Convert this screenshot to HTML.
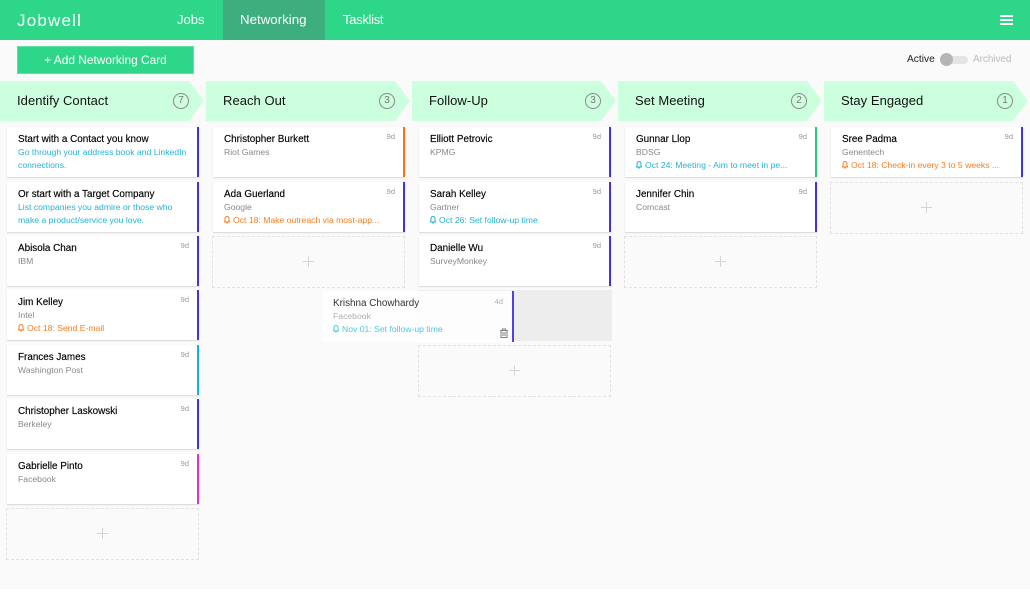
<!DOCTYPE html>
<html><head><meta charset="utf-8">
<style>
html,body{margin:0;padding:0;background:#fff}
#p{position:relative;width:1030px;height:600px;overflow:hidden;background:#fff;font-family:"Liberation Sans",sans-serif}
#bg{position:absolute;left:0;top:40px;width:1030px;height:549px;background:#fafafa}
#nav{position:absolute;left:0;top:0;width:1030px;height:40px;background:#2dd688}
.a{position:absolute;white-space:nowrap}
.n{color:#fff;font-size:13.3px;top:12px;line-height:16px}
.h{position:absolute;top:81px;width:204px;height:40px;background:#ccffdd;clip-path:polygon(0 0,189px 0,204px 20px,189px 40px,0 40px)}
.h span{position:absolute;left:17px;top:11px;font-size:13px;line-height:18px;color:#111;white-space:nowrap;letter-spacing:.05px}
.h i{position:absolute;left:173px;top:12px;width:14px;height:14px;border:1px solid #888;border-radius:50%;font:normal 10px/14px "Liberation Sans",sans-serif;text-align:center;color:#777}
.c{position:absolute;width:190px;height:50px;background:#fff;border-right:2px solid #4433dd;box-shadow:0 1px 1px #d8d8d8,0 0 1px #eee}
.t{position:absolute;left:11px;top:6px;font-size:9.9px;line-height:14px;color:#000;white-space:nowrap;-webkit-text-stroke:.15px #000}
.s{position:absolute;left:11px;top:19px;font-size:8.65px;line-height:13px;color:#888;white-space:nowrap}
.l{position:absolute;left:11px;top:32px;font-size:8.65px;line-height:13px;white-space:nowrap}
.b{color:#22b3d6}.o{color:#f97c1c}
.l svg{vertical-align:-1px;margin-right:3px}
.d{position:absolute;right:8px;top:5px;font-size:7.5px;line-height:10px;color:#999}
.e{position:absolute;width:191px;height:50px;border:1px dashed #e2e2e2}
.e:before{content:"";position:absolute;left:90px;top:24px;width:11px;height:1px;background:#d4d4d4}
.e:after{content:"";position:absolute;left:95px;top:19px;width:1px;height:11px;background:#d4d4d4}
</style></head><body>
<div id="p">
<div id="bg"></div>
<div id="nav"></div>
<div class="a" style="left:223px;top:0;width:102px;height:40px;background:#3fae7f"></div>
<div class="a" style="left:17px;top:10px;font-size:17px;line-height:21px;color:#fff;letter-spacing:1.2px">Jobwell</div>
<div class="a n" style="left:177px;font-size:13px">Jobs</div>
<div class="a n" style="left:240px">Networking</div>
<div class="a n" style="left:343px;font-size:13px;letter-spacing:-.3px">Tasklist</div>
<div class="a" style="left:1000px;top:15px;width:13px;height:1.5px;background:#fff"></div>
<div class="a" style="left:1000px;top:19px;width:13px;height:1.5px;background:#fff"></div>
<div class="a" style="left:1000px;top:23px;width:13px;height:1.5px;background:#fff"></div>

<div class="a" style="left:17px;top:46px;width:175px;height:26px;background:#2dd688;border:1px solid #5fe0a4;color:#fff;font-size:11.9px;line-height:26px;text-align:center">+ Add Networking Card</div>
<div class="a" style="left:907px;top:53px;font-size:10.2px;line-height:13px;color:#222">Active</div>
<div class="a" style="left:942px;top:56px;width:26px;height:8px;border-radius:4px;background:#e4e4e4"></div>
<div class="a" style="left:940px;top:53px;width:13px;height:13px;border-radius:50%;background:#b5b5b5"></div>
<div class="a" style="left:973px;top:53px;font-size:9.9px;line-height:13px;color:#bbb">Archived</div>

<div class="h" style="left:0"><span>Identify Contact</span><i>7</i></div>
<div class="h" style="left:206px"><span>Reach Out</span><i>3</i></div>
<div class="h" style="left:412px"><span>Follow-Up</span><i>3</i></div>
<div class="h" style="left:618px"><span>Set Meeting</span><i>2</i></div>
<div class="h" style="left:824px"><span>Stay Engaged</span><i>1</i></div>

<!-- column 1 -->
<div class="c" style="left:7px;top:127px"><div class="t">Start with a Contact you know</div><div class="s b">Go through your address book and LinkedIn</div><div class="l b">connections.</div></div>
<div class="c" style="left:7px;top:181.5px"><div class="t">Or start with a Target Company</div><div class="s b">List companies you admire or those who</div><div class="l b">make a product/service you love.</div></div>
<div class="c" style="left:7px;top:236px"><div class="t">Abisola Chan</div><div class="d">9d</div><div class="s">IBM</div></div>
<div class="c" style="left:7px;top:290px"><div class="t">Jim Kelley</div><div class="d">9d</div><div class="s">Intel</div><div class="l o"><svg width="6" height="8" viewBox="0 0 6 8"><path d="M3 .5C1.6.5 1 1.6 1 3v2L.3 6h5.4L5 5V3C5 1.6 4.4.5 3 .5zM2.2 7h1.6" fill="none" stroke="#f97c1c"/></svg>Oct 18: Send E-mail</div></div>
<div class="c" style="left:7px;top:345px;border-right-color:#16aee0"><div class="t">Frances James</div><div class="d">9d</div><div class="s">Washington Post</div></div>
<div class="c" style="left:7px;top:399px"><div class="t">Christopher Laskowski</div><div class="d">9d</div><div class="s">Berkeley</div></div>
<div class="c" style="left:7px;top:453.5px;border-right-color:#dd33cc"><div class="t">Gabrielle Pinto</div><div class="d">9d</div><div class="s">Facebook</div></div>
<div class="e" style="left:6px;top:507.5px"></div>

<!-- column 2 -->
<div class="c" style="left:213px;top:127px;border-right-color:#f97316"><div class="t">Christopher Burkett</div><div class="d">9d</div><div class="s">Riot Games</div></div>
<div class="c" style="left:213px;top:181.5px"><div class="t">Ada Guerland</div><div class="d">9d</div><div class="s">Google</div><div class="l o"><svg width="6" height="8" viewBox="0 0 6 8"><path d="M3 .5C1.6.5 1 1.6 1 3v2L.3 6h5.4L5 5V3C5 1.6 4.4.5 3 .5zM2.2 7h1.6" fill="none" stroke="#f97c1c"/></svg>Oct 18: Make outreach via most-app...</div></div>
<div class="e" style="left:212px;top:236px"></div>

<!-- column 3 -->
<div class="c" style="left:419px;top:127px"><div class="t">Elliott Petrovic</div><div class="d">9d</div><div class="s">KPMG</div></div>
<div class="c" style="left:419px;top:181.5px"><div class="t">Sarah Kelley</div><div class="d">9d</div><div class="s">Gartner</div><div class="l b"><svg width="6" height="8" viewBox="0 0 6 8"><path d="M3 .5C1.6.5 1 1.6 1 3v2L.3 6h5.4L5 5V3C5 1.6 4.4.5 3 .5zM2.2 7h1.6" fill="none" stroke="#22b3d6"/></svg>Oct 26: Set follow-up time</div></div>
<div class="c" style="left:419px;top:236px"><div class="t">Danielle Wu</div><div class="d">9d</div><div class="s">SurveyMonkey</div></div>
<div class="a" style="left:418px;top:290px;width:194px;height:51px;background:#ededed"></div>
<div class="a" style="left:322px;top:291px;width:190px;height:51px;background:#fff;opacity:.92;border-right:2px solid #4433dd">
 <div class="t" style="color:#222;top:6px;-webkit-text-stroke:0">Krishna Chowhardy</div><div class="d" style="color:#aaa;top:6px;right:9px">4d</div><div class="s" style="color:#aaa">Facebook</div><div class="l" style="color:#3fc4e0"><svg width="6" height="8" viewBox="0 0 6 8"><path d="M3 .5C1.6.5 1 1.6 1 3v2L.3 6h5.4L5 5V3C5 1.6 4.4.5 3 .5zM2.2 7h1.6" fill="none" stroke="#3fc4e0"/></svg>Nov 01: Set follow-up time</div>
 <svg style="position:absolute;left:177px;top:37px" width="10" height="10" viewBox="0 0 10 10"><path d="M1 2.5h8M3.5 2.5V1h3v1.500M2 2.500V9.500h6V2.500M4 4v4M6 4v4" fill="none" stroke="#777" stroke-width="1"/></svg>
</div>
<div class="e" style="left:418px;top:345px"></div>

<!-- column 4 -->
<div class="c" style="left:625px;top:127px;border-right-color:#2dc67e"><div class="t">Gunnar Llop</div><div class="d">9d</div><div class="s">BDSG</div><div class="l b"><svg width="6" height="8" viewBox="0 0 6 8"><path d="M3 .5C1.6.5 1 1.6 1 3v2L.3 6h5.4L5 5V3C5 1.6 4.4.5 3 .5zM2.2 7h1.6" fill="none" stroke="#22b3d6"/></svg>Oct 24: Meeting - Aim to meet in pe...</div></div>
<div class="c" style="left:625px;top:181.5px"><div class="t">Jennifer Chin</div><div class="d">9d</div><div class="s">Comcast</div></div>
<div class="e" style="left:624px;top:236px"></div>

<!-- column 5 -->
<div class="c" style="left:831px;top:127px"><div class="t">Sree Padma</div><div class="d">9d</div><div class="s">Genentech</div><div class="l o"><svg width="6" height="8" viewBox="0 0 6 8"><path d="M3 .5C1.6.5 1 1.6 1 3v2L.3 6h5.4L5 5V3C5 1.6 4.4.5 3 .5zM2.2 7h1.6" fill="none" stroke="#f97c1c"/></svg>Oct 18: Check-in every 3 to 5 weeks ...</div></div>
<div class="e" style="left:830px;top:181.5px"></div>
</div>
</body></html>
